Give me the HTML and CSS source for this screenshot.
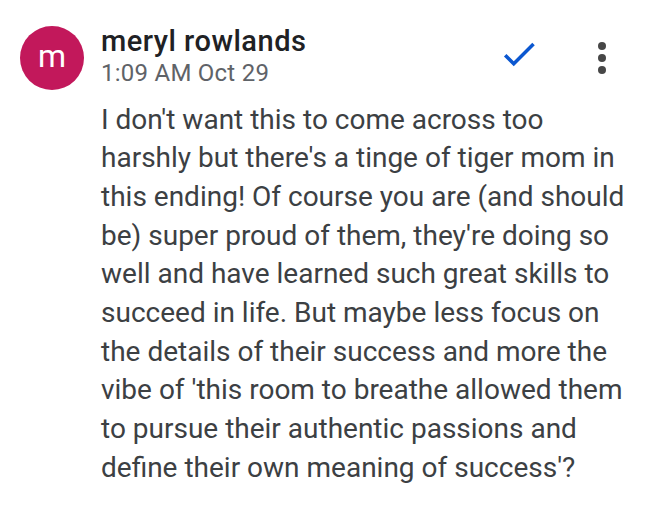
FILE: index.html
```html
<!DOCTYPE html>
<html>
<head>
<meta charset="utf-8">
<link rel="stylesheet" href="styles.css">
</head>
<body>
<div class="comment">
  <div class="avatar">m</div>
  <div class="content">
    <div class="header">
      <div class="meta">
        <div class="name">meryl rowlands</div>
        <div class="date">1:09 AM Oct 29</div>
      </div>
      <div class="actions">
        <svg class="check" width="42" height="42" viewBox="0 0 24 24"><path d="M9 16.17L4.83 12l-1.42 1.41L9 19 21 7l-1.41-1.41z" fill="#0b57d0"/></svg>
        <svg class="more" width="12" height="34" viewBox="0 0 12 34"><circle cx="6" cy="5" r="4" fill="#474747"/><circle cx="6" cy="17" r="4" fill="#474747"/><circle cx="6" cy="29" r="4" fill="#474747"/></svg>
      </div>
    </div>
    <p class="text">I don't want this to come across too harshly but there's a tinge of tiger mom in this ending! Of course you are (and should be) super proud of them, they're doing so well and have learned such great skills to succeed in life. But maybe less focus on the details of their success and more the vibe of 'this room to breathe allowed them to pursue their authentic passions and define their own meaning of success'?</p>
  </div>
</div>
</body>
</html>
```

FILE: styles.css
```css
html, body {
  margin: 0;
  padding: 0;
  background: #ffffff;
}
body {
  font-family: Roboto, "Noto Sans", sans-serif;
  width: 660px;
  height: 508px;
  overflow: hidden;
}
.comment {
  display: flex;
  align-items: flex-start;
  padding: 25px 20px 0 20px;
  gap: 17px;
}
.avatar {
  flex: 0 0 64px;
  width: 64px;
  height: 64px;
  margin-top: 1px;
  border-radius: 50%;
  background: #c2185b;
  color: #ffffff;
  font-size: 32px;
  line-height: 60px;
  text-align: center;
}
.content {
  flex: 1;
  min-width: 0;
}
.header {
  display: flex;
  align-items: flex-start;
}
.meta {
  flex: 1;
}
.name {
  font-size: 29px;
  font-weight: 500;
  letter-spacing: 0.5px;
  line-height: 32px;
  color: #202124;
}
.date {
  font-size: 24px;
  letter-spacing: 0.25px;
  line-height: 32px;
  color: #5f6368;
}
.actions {
  display: flex;
  align-items: flex-start;
  gap: 56px;
  margin-right: 32px;
}
.check {
  margin-top: 8px;
}
.more {
  margin-top: 16px;
}
.text {
  margin: 11.5px 0 0 0;
  font-size: 28px;
  line-height: 38.7px;
  color: #3c4043;
  width: 532px;
}
```
